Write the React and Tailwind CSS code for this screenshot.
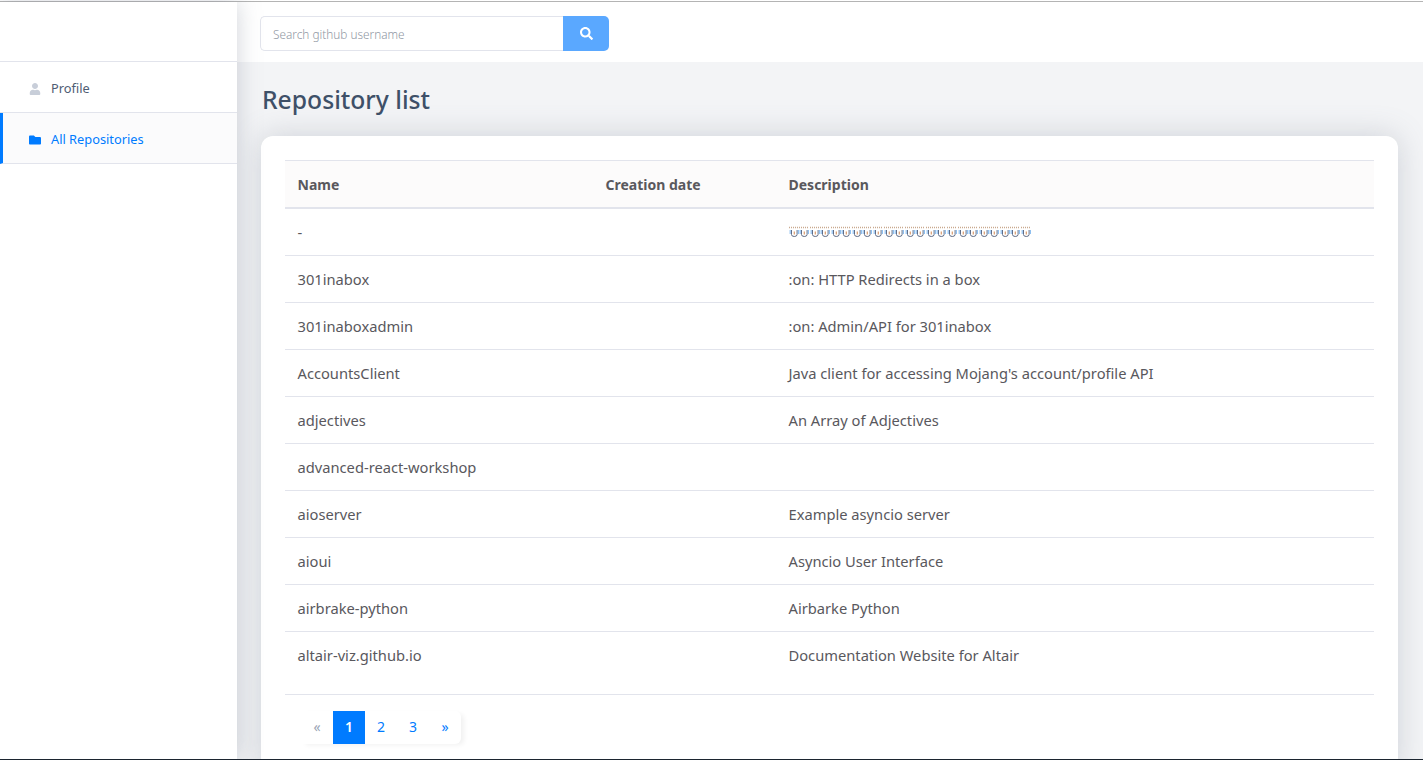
import { FaFolder, FaSearch, FaUser } from "react-icons/fa";

const rows = [
  { name: "-", description: null },
  { name: "301inabox", description: ":on: HTTP Redirects in a box" },
  { name: "301inaboxadmin", description: ":on: Admin/API for 301inabox" },
  { name: "AccountsClient", description: "Java client for accessing Mojang's account/profile API" },
  { name: "adjectives", description: "An Array of Adjectives" },
  { name: "advanced-react-workshop", description: "" },
  { name: "aioserver", description: "Example asyncio server" },
  { name: "aioui", description: "Asyncio User Interface" },
  { name: "airbrake-python", description: "Airbarke Python" },
  { name: "altair-viz.github.io", description: "Documentation Website for Altair" },
];

function TinyGlyph() {
  return (
    <svg width="10.57" height="13" viewBox="0 0 10.57 13" fill="none" className="shrink-0">
      <path d="M0 2.500h10" stroke="#c9a98f" strokeWidth="1.6" strokeDasharray="1 1" />
      <path d="M2.500 5v4.500q0 2 2.800 2t2.800-2V5" stroke="#5f6b85" strokeWidth="1" />
      <path d="M5.300 6.500v3" stroke="#d99a6c" strokeWidth="1.2" />
      <path d="M1.200 5v4M9.400 5v4" stroke="#8fc0f0" strokeWidth="1.2" />
    </svg>
  );
}

function GlyphRow() {
  return (
    <div className="flex h-[13px] w-[244px]">
      {Array.from({ length: 23 }, (_, i) => (
        <TinyGlyph key={i} />
      ))}
    </div>
  );
}

function NavItem({ icon: Icon, label, active }) {
  return (
    <a
      className={`flex h-[51px] items-center border-b border-[#e2e4ec] pt-[4px] text-[12.8px] ${
        active
          ? "border-l-[3px] border-l-[#007bff] bg-[#fbfbfc] pl-[26px] text-[#007bff]"
          : "pl-[29px] text-[#4f5d73]"
      }`}
    >
      <Icon className={`mr-[10px] size-3 ${active ? "text-[#007bff]" : "text-[#c8ced9]"}`} />
      {label}
    </a>
  );
}

function Pagination() {
  const cell = "flex h-[33px] w-8 items-center justify-center text-sm";
  return (
    <div className="mt-4 ml-4 flex w-fit rounded-r-md shadow-[4px_2px_5px_-1px_rgba(0,0,0,0.06)]">
      <span className={`${cell} text-[#9aa5b5]`}>«</span>
      <span className={`${cell} bg-[#007bff] font-semibold text-white`}>1</span>
      <span className={`${cell} text-[#007bff]`}>2</span>
      <span className={`${cell} text-[#007bff]`}>3</span>
      <span className={`${cell} text-[#007bff]`}>»</span>
    </div>
  );
}

export default function App() {
  return (
    <div className="relative flex h-screen flex-col overflow-hidden bg-white font-['Noto_Sans',sans-serif]">
      <div className="h-[2px] shrink-0 border-t border-white bg-[#b4b4b4]" />
      <div className="flex min-h-0 flex-1">
        <aside className="relative z-10 w-[237px] shrink-0 bg-white shadow-[0_0_22px_rgba(120,130,145,0.35)]">
          <div className="h-[60px] border-b border-[#e2e4ec]" />
          <NavItem icon={FaUser} label="Profile" />
          <NavItem icon={FaFolder} label="All Repositories" active />
        </aside>
        <main className="min-w-0 flex-1 bg-[#f3f4f6]">
          <header className="flex h-[60px] items-start bg-white pt-[14px] pl-[23px]">
            <div className="flex h-[35px] w-[349px]">
              <input
                placeholder="Search github username"
                className="min-w-0 flex-1 rounded-l-[5px] border border-r-0 border-[#e2e4ec] bg-white pt-[3px] pl-3 text-[11.8px] font-light text-[#4f5d73] outline-none placeholder:text-[#9097a3]"
              />
              <button className="flex w-[46px] items-center justify-center rounded-r-[5px] bg-[#5aa8ff] text-white">
                <FaSearch className="size-[13px]" />
              </button>
            </div>
          </header>
          <div className="pt-[19px] pl-6 pr-[25px]">
            <h1 className="mb-[17px] ml-px text-[24.7px] leading-[38px] font-medium text-[#3e5068]">Repository list</h1>
            <section className="rounded-xl bg-white px-6 pt-6 pb-8 shadow-[0_0_30px_rgba(120,130,145,0.3)]">
              <table className="w-[1089px] table-fixed border-collapse text-[14.7px] text-[#59585d]">
                <thead>
                  <tr className="h-[47px] border-t border-b-2 border-t-[#e2e4ec] border-b-[#e2e4ec] bg-[#fcfbfb] text-left text-sm font-bold">
                    <th className="w-[308px] pt-[3px] pl-[12.5px] font-bold">Name</th>
                    <th className="w-[183px] pt-[3px] pl-[12.5px] font-bold">Creation date</th>
                    <th className="pt-[3px] pl-[12.5px] font-bold">Description</th>
                  </tr>
                </thead>
                <tbody>
                  {rows.map((row) => (
                    <tr key={row.name} className="h-[47px] border-b border-[#e2e4ec] first:h-[48px] last:border-b-0">
                      <td className="pl-[12.5px]">{row.name}</td>
                      <td />
                      <td className="pl-[12.5px]">{row.description === null ? <GlyphRow /> : row.description}</td>
                    </tr>
                  ))}
                </tbody>
              </table>
              <div className="mt-[15px] border-t border-[#e2e4ec]">
                <Pagination />
              </div>
            </section>
          </div>
        </main>
      </div>
      <div className="absolute inset-x-0 bottom-0 z-20 h-px bg-[#1c2530]" />
    </div>
  );
}
